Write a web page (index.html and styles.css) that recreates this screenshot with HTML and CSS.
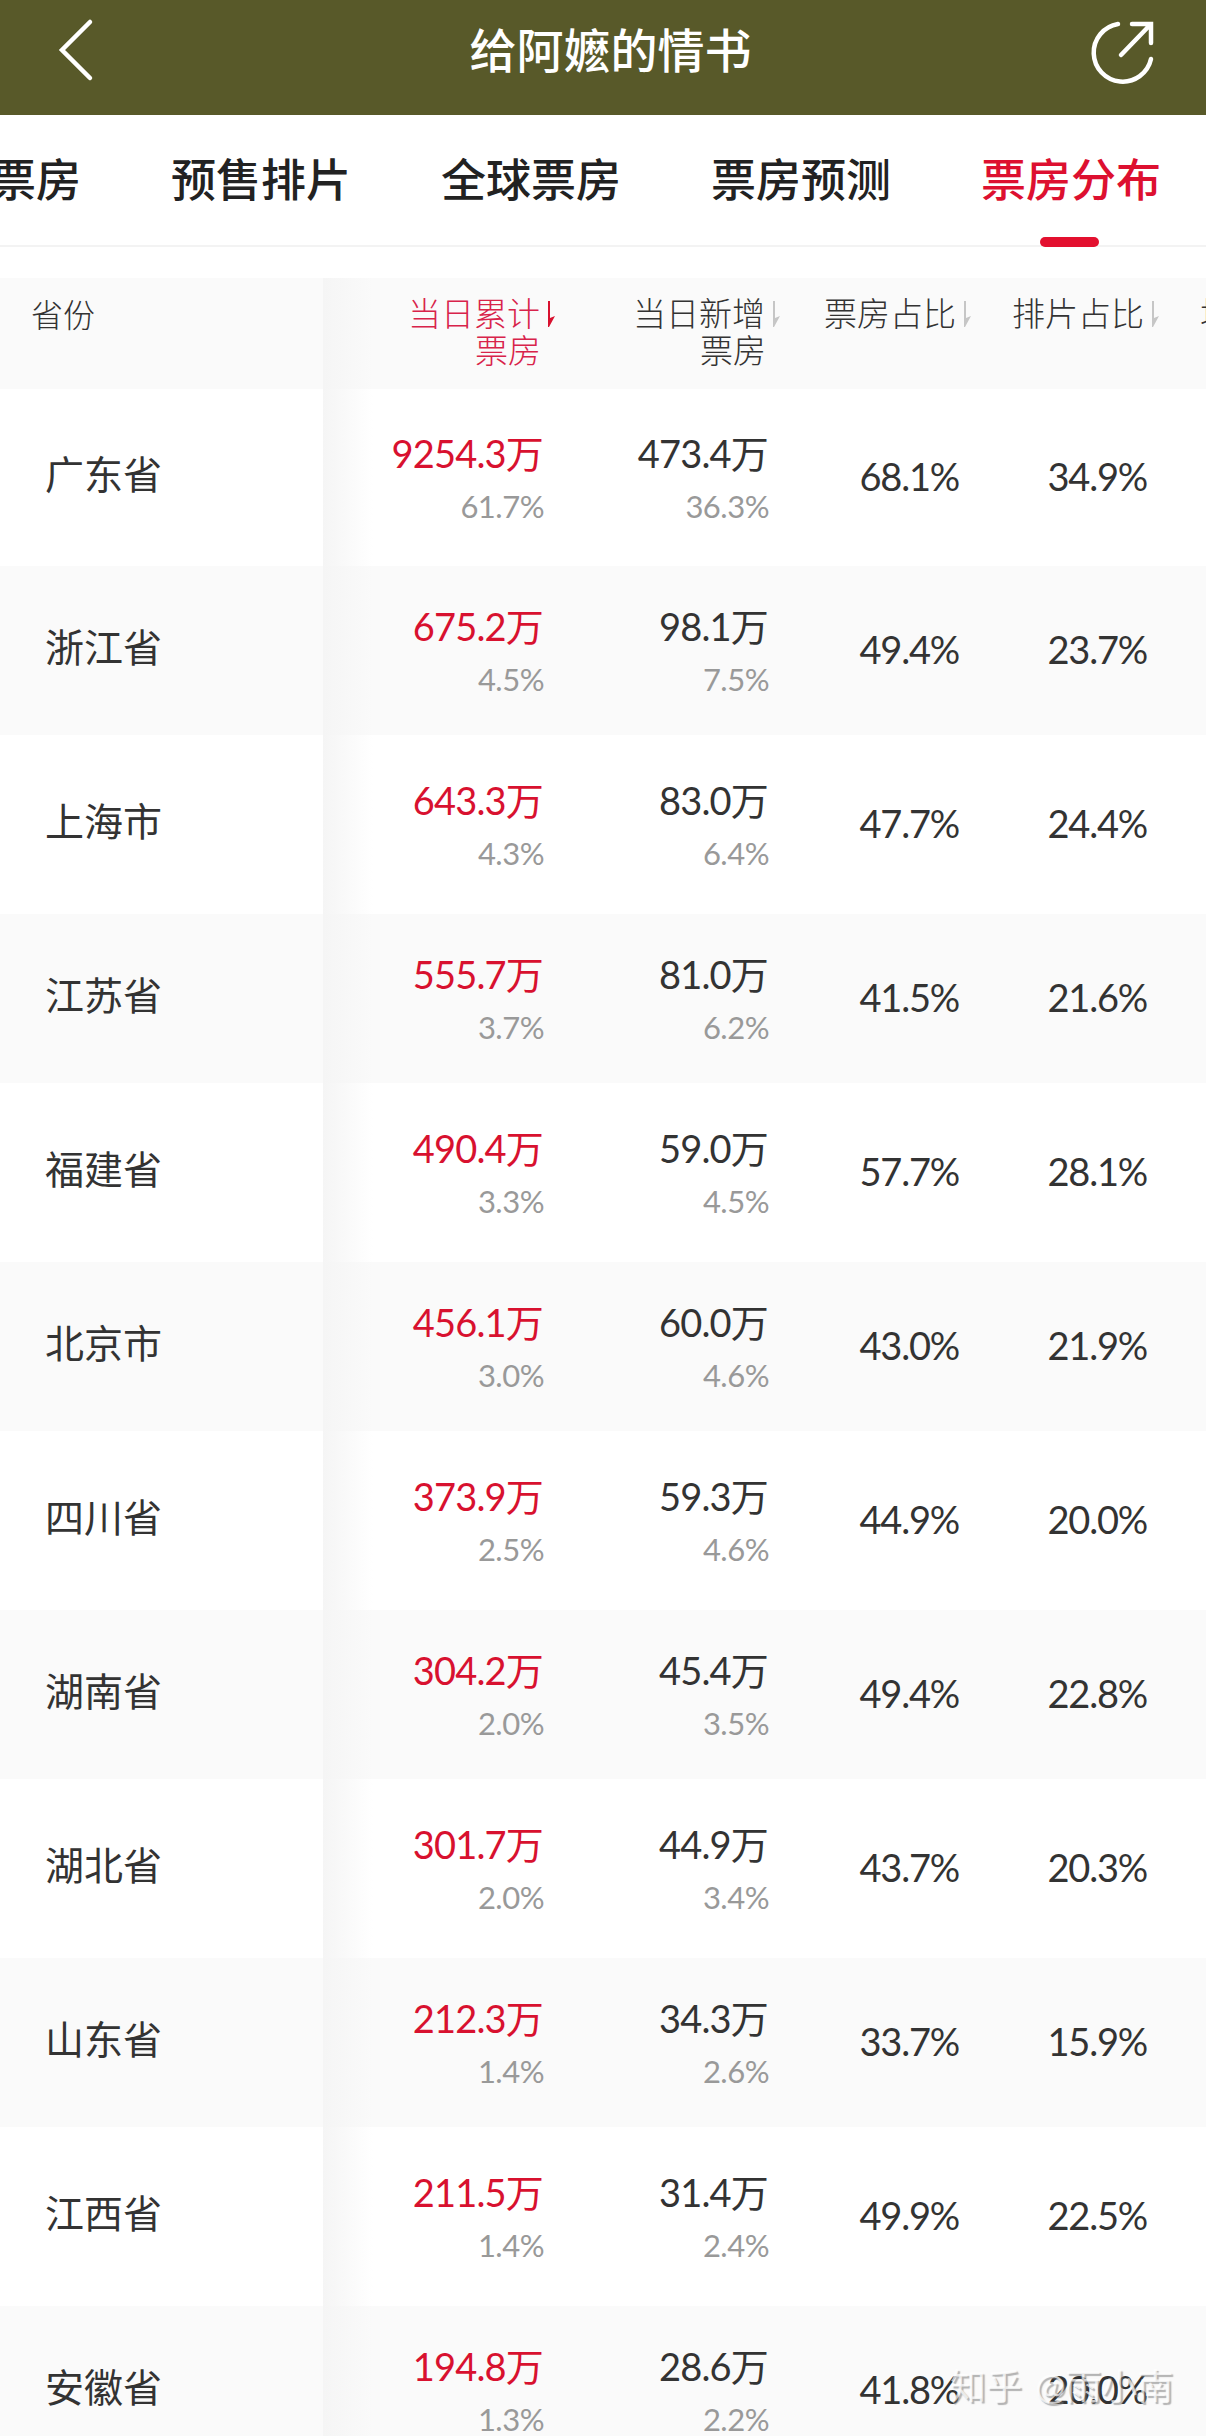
FILE: index.html
```html
<!doctype html>
<html lang="zh-CN">

<head>
    <meta charset="UTF-8">
    <title>给阿嬷的情书</title>
    <link rel="stylesheet" href="styles.css">
</head>

<body>
    <div class="topbar">
        <svg class="back" width="40" height="70" viewBox="0 0 40 70"><path d="M33 7 L5 35 L33 63" /></svg>
        <h1>给阿嬷的情书</h1>
        <svg class="share" width="70" height="70" viewBox="0 0 70 70">
            <path d="M29 5 A29 29 0 1 0 62 40" />
            <path d="M32 36 L61 6 M43 5 L62 5 L62 24" />
        </svg>
    </div>

    <ul class="tabs">
        <li>实时票房</li>
        <li>预售排片</li>
        <li>全球票房</li>
        <li>票房预测</li>
        <li class="on">票房分布</li>
    </ul>

    <div class="table">
        <div class="row head">
            <div class="name">省份</div>
            <div class="col on"><span class="th">当日累计<svg class="sort" width="8" height="26" viewBox="0 0 8 26"><path d="M1 0 H3 V17 L8 15 L2 26 L1 26 Z" /></svg></span><span class="th2">票房</span></div>
            <div class="col"><span class="th">当日新增<svg class="sort" width="8" height="26" viewBox="0 0 8 26"><path d="M1 0 H3 V17 L8 15 L2 26 L1 26 Z" /></svg></span><span class="th2">票房</span></div>
            <div class="col"><span class="th">票房占比<svg class="sort" width="8" height="26" viewBox="0 0 8 26"><path d="M1 0 H3 V17 L8 15 L2 26 L1 26 Z" /></svg></span></div>
            <div class="col"><span class="th">排片占比<svg class="sort" width="8" height="26" viewBox="0 0 8 26"><path d="M1 0 H3 V17 L8 15 L2 26 L1 26 Z" /></svg></span></div>
            <div class="col next"><span class="th">场均人次</span></div>
        </div>

        <div class="row">
            <div class="name">广东省</div>
            <div class="col total"><b>9254.3万</b><i>61.7%</i></div>
            <div class="col"><b>473.4万</b><i>36.3%</i></div>
            <div class="col mid">68.1%</div>
            <div class="col mid">34.9%</div>
        </div>
        <div class="row">
            <div class="name">浙江省</div>
            <div class="col total"><b>675.2万</b><i>4.5%</i></div>
            <div class="col"><b>98.1万</b><i>7.5%</i></div>
            <div class="col mid">49.4%</div>
            <div class="col mid">23.7%</div>
        </div>
        <div class="row">
            <div class="name">上海市</div>
            <div class="col total"><b>643.3万</b><i>4.3%</i></div>
            <div class="col"><b>83.0万</b><i>6.4%</i></div>
            <div class="col mid">47.7%</div>
            <div class="col mid">24.4%</div>
        </div>
        <div class="row">
            <div class="name">江苏省</div>
            <div class="col total"><b>555.7万</b><i>3.7%</i></div>
            <div class="col"><b>81.0万</b><i>6.2%</i></div>
            <div class="col mid">41.5%</div>
            <div class="col mid">21.6%</div>
        </div>
        <div class="row">
            <div class="name">福建省</div>
            <div class="col total"><b>490.4万</b><i>3.3%</i></div>
            <div class="col"><b>59.0万</b><i>4.5%</i></div>
            <div class="col mid">57.7%</div>
            <div class="col mid">28.1%</div>
        </div>
        <div class="row">
            <div class="name">北京市</div>
            <div class="col total"><b>456.1万</b><i>3.0%</i></div>
            <div class="col"><b>60.0万</b><i>4.6%</i></div>
            <div class="col mid">43.0%</div>
            <div class="col mid">21.9%</div>
        </div>
        <div class="row">
            <div class="name">四川省</div>
            <div class="col total"><b>373.9万</b><i>2.5%</i></div>
            <div class="col"><b>59.3万</b><i>4.6%</i></div>
            <div class="col mid">44.9%</div>
            <div class="col mid">20.0%</div>
        </div>
        <div class="row">
            <div class="name">湖南省</div>
            <div class="col total"><b>304.2万</b><i>2.0%</i></div>
            <div class="col"><b>45.4万</b><i>3.5%</i></div>
            <div class="col mid">49.4%</div>
            <div class="col mid">22.8%</div>
        </div>
        <div class="row">
            <div class="name">湖北省</div>
            <div class="col total"><b>301.7万</b><i>2.0%</i></div>
            <div class="col"><b>44.9万</b><i>3.4%</i></div>
            <div class="col mid">43.7%</div>
            <div class="col mid">20.3%</div>
        </div>
        <div class="row">
            <div class="name">山东省</div>
            <div class="col total"><b>212.3万</b><i>1.4%</i></div>
            <div class="col"><b>34.3万</b><i>2.6%</i></div>
            <div class="col mid">33.7%</div>
            <div class="col mid">15.9%</div>
        </div>
        <div class="row">
            <div class="name">江西省</div>
            <div class="col total"><b>211.5万</b><i>1.4%</i></div>
            <div class="col"><b>31.4万</b><i>2.4%</i></div>
            <div class="col mid">49.9%</div>
            <div class="col mid">22.5%</div>
        </div>
        <div class="row">
            <div class="name">安徽省</div>
            <div class="col total"><b>194.8万</b><i>1.3%</i></div>
            <div class="col"><b>28.6万</b><i>2.2%</i></div>
            <div class="col mid">41.8%</div>
            <div class="col mid">20.0%</div>
        </div>
    </div>

    <div class="mark">知乎 @雨小南</div>
</body>

</html>
```

FILE: styles.css
```css
* {
    margin: 0;
    padding: 0;
    list-style: none;
    box-sizing: border-box;
}

html,
body {
    height: 2436px;
    overflow: hidden;
}

body {
    position: relative;
    background: #fff;
    color: #333;
    font-family: Lato, "Noto Sans CJK SC", sans-serif;
}

/* 顶部标题栏 */
.topbar {
    height: 115px;
    background: #585929;
    display: flex;
    align-items: center;
    justify-content: space-between;
    padding: 0 47px 15px 57px;
}

.topbar h1 {
    font-size: 47px;
    font-weight: 500;
    color: #fff;
    line-height: 60px;
    margin-left: 35px;
}

.topbar svg {
    fill: none;
    stroke: #fff;
    stroke-linecap: round;
    stroke-width: 4.5;
}

.topbar .share {
    margin-top: 8px;
}

/* 标签 */
.tabs {
    height: 132px;
    display: flex;
    gap: 90px;
    margin-left: -99px;
    padding-top: 35px;
    border-bottom: 2px solid #f3f3f3;
}

.tabs li {
    position: relative;
    flex: none;
    width: 180px;
    height: 60px;
    font-size: 45px;
    font-weight: 500;
    line-height: 60px;
    color: #222;
    white-space: nowrap;
}

.tabs .on {
    color: #dd1030;
}

.tabs .on::after {
    content: "";
    position: absolute;
    left: 59px;
    top: 87px;
    width: 59px;
    height: 10px;
    border-radius: 5px;
    background: #e3102f;
}

/* 表格 */
.table {
    margin-top: 31px;
    overflow: hidden;
}

.row {
    display: grid;
    grid-template-columns: 323px 237px 225px 191px 188px 200px;
    width: 1364px;
}

.row:nth-child(even) {
    height: 177px;
}

.row:nth-child(odd) {
    height: 169px;
    background: #fafafa;
}

.row:nth-child(2n+4) {
    height: 179px;
}

.row.head {
    height: 111px;
    background: #fafafa;
}

.name {
    display: flex;
    align-items: center;
    padding-left: 45px;
    padding-bottom: 12px;
    font-size: 39px;
    color: #333;
}

.col {
    display: flex;
    flex-direction: column;
    align-items: flex-end;
    justify-content: center;
    padding-right: 17px;
    background: linear-gradient(90deg, #f5f5f5, rgba(245, 245, 245, 0) 50px);
}

.col + .col {
    background: none;
}

.col b {
    font-size: 38px;
    font-weight: 400;
    line-height: 46px;
    letter-spacing: -0.8px;
    color: #333;
}

.col i {
    font-size: 31px;
    font-style: normal;
    line-height: 40px;
    margin-top: 10px;
    margin-right: -1px;
    letter-spacing: -0.5px;
    color: #999;
}

.total b {
    color: #d8112f;
}

.mid {
    padding-bottom: 3px;
    font-size: 38px;
    line-height: 46px;
    letter-spacing: -1.2px;
}

/* 表头 */
.head .name {
    align-items: flex-start;
    padding: 15px 0 0 31px;
    font-size: 32px;
    font-weight: 300;
    line-height: 44px;
}

.head .col {
    justify-content: flex-start;
    padding: 17px 5px 0 0;
    font-size: 33px;
    font-weight: 300;
    line-height: 37px;
}

.th {
    display: flex;
    align-items: center;
    gap: 7px;
    white-space: nowrap;
}

.th2 {
    margin-right: 14px;
}

.sort {
    fill: #c6c6c6;
}

.head .on {
    color: #d8234a;
}

.head .on .sort {
    fill: #d8112f;
}

.head .next {
    align-items: flex-start;
    padding-left: 36px;
}

/* 水印 */
.mark {
    position: absolute;
    left: 950px;
    top: 2362px;
    font-size: 36px;
    line-height: 48px;
    word-spacing: 4px;
    white-space: nowrap;
    color: rgba(255, 255, 255, 0.72);
    text-shadow: 2px 2px 1px rgba(120, 120, 120, 0.55);
}
```
